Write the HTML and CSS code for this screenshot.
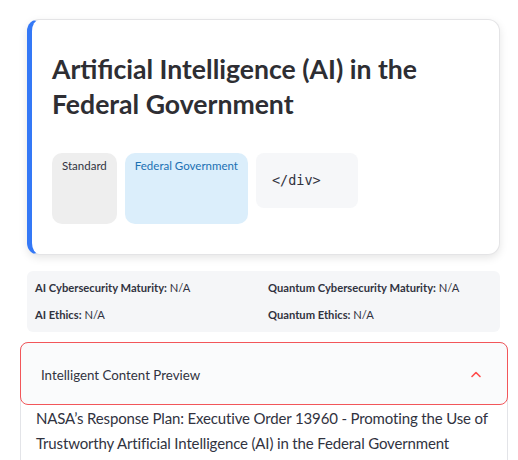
FILE: index.html
```html
<!DOCTYPE html>
<html>
<head>
<meta charset="utf-8">
<link rel="stylesheet" href="styles.css">
</head>
<body>
<main class="page">
  <section class="card">
    <h1 class="title">Artificial Intelligence (AI) in the Federal Government</h1>
    <div class="tags">
      <span class="tag tag-gray">Standard</span>
      <span class="tag tag-blue">Federal Government</span>
      <pre class="code">&lt;/div&gt;</pre>
    </div>
  </section>
  <section class="metrics">
    <div class="metric"><b>AI Cybersecurity Maturity:</b> N/A</div>
    <div class="metric"><b>Quantum Cybersecurity Maturity:</b> N/A</div>
    <div class="metric"><b>AI Ethics:</b> N/A</div>
    <div class="metric"><b>Quantum Ethics:</b> N/A</div>
  </section>
  <section class="expander">
    <div class="exp-head">
      <span class="exp-title">Intelligent Content Preview</span>
      <svg class="chev" width="12" height="8" viewBox="0 0 12 8"><polyline points="2,6.5 6,2.5 10,6.5" fill="none" stroke="#ff4b4b" stroke-width="1.6" stroke-linecap="round" stroke-linejoin="round"/></svg>
    </div>
    <div class="exp-body">
      <p>NASA’s Response Plan: Executive Order 13960 - Promoting the Use of Trustworthy Artificial Intelligence (AI) in the Federal Government</p>
    </div>
  </section>
</main>
</body>
</html>
```
FILE: styles.css
```css
* { box-sizing: border-box; }
html, body { margin: 0; padding: 0; background: #fff; }
body {
  font-family: "Lato", "Open Sans", sans-serif;
  color: #31333f;
  overflow: hidden;
}
.page {
  width: 488px;
  margin-left: 20px;
  padding-top: 19px;
}
.card {
  margin: 0 8px 0 7px;
  height: 236px;
  background: #fff;
  border: 1px solid #e4e4e6;
  border-left: 5px solid #3478f6;
  border-radius: 12px;
  box-shadow: 0 3px 8px rgba(0,0,0,0.10);
  padding: 32px 20px 0 20px;
}
.title {
  margin: 0;
  font-size: 26.6px;
  line-height: 35px;
  font-weight: 700;
  color: #2e2e33;
}
.tags {
  display: flex;
  align-items: flex-start;
  gap: 8px;
  margin-top: 31px;
}
.tag {
  height: 71px;
  border-radius: 10px;
  padding: 4px 10px;
  font-size: 11.5px;
  line-height: 18px;
}
.tag-gray { background: #eeeeee; color: #31333f; }
.tag-blue { background: #dbeefb; color: #1a70b3; }
.code {
  margin: 0;
  width: 102px;
  height: 55px;
  background: #f6f7f9;
  border-radius: 8px;
  padding: 18px 16px;
  font-family: "DejaVu Sans Mono", monospace;
  font-size: 13.5px;
  line-height: 18px;
  color: #31333f;
}
.metrics {
  margin: 16px 8px 0 7px;
  height: 61px;
  background: #f5f6f8;
  border-radius: 6px;
  padding: 8px 8px;
  display: grid;
  grid-template-columns: 233px 1fr;
  row-gap: 9px;
  font-size: 11.2px;
  line-height: 18px;
  color: #31333f;
}
.metric b { font-weight: 700; }
.expander {
  margin-top: 10px;
  border: 1px solid #e3e4e8;
  border-radius: 8px;
  height: 140px;
}
.exp-head {
  margin: -1px;
  height: 63px;
  border: 1px solid #f2565a;
  border-radius: 8px;
  background: #fafbfc;
  display: flex;
  align-items: center;
  justify-content: space-between;
  padding: 0 25px 0 20px;
  font-size: 13.3px;
  color: #31333f;
}
.exp-title { padding-top: 2px; }
.chev { display: block; }
.exp-body {
  padding: 2px 6px 0 15px;
}
.exp-body p {
  margin: 0;
  font-size: 15px;
  letter-spacing: -0.15px;
  line-height: 25px;
  color: #31333f;
}
```
